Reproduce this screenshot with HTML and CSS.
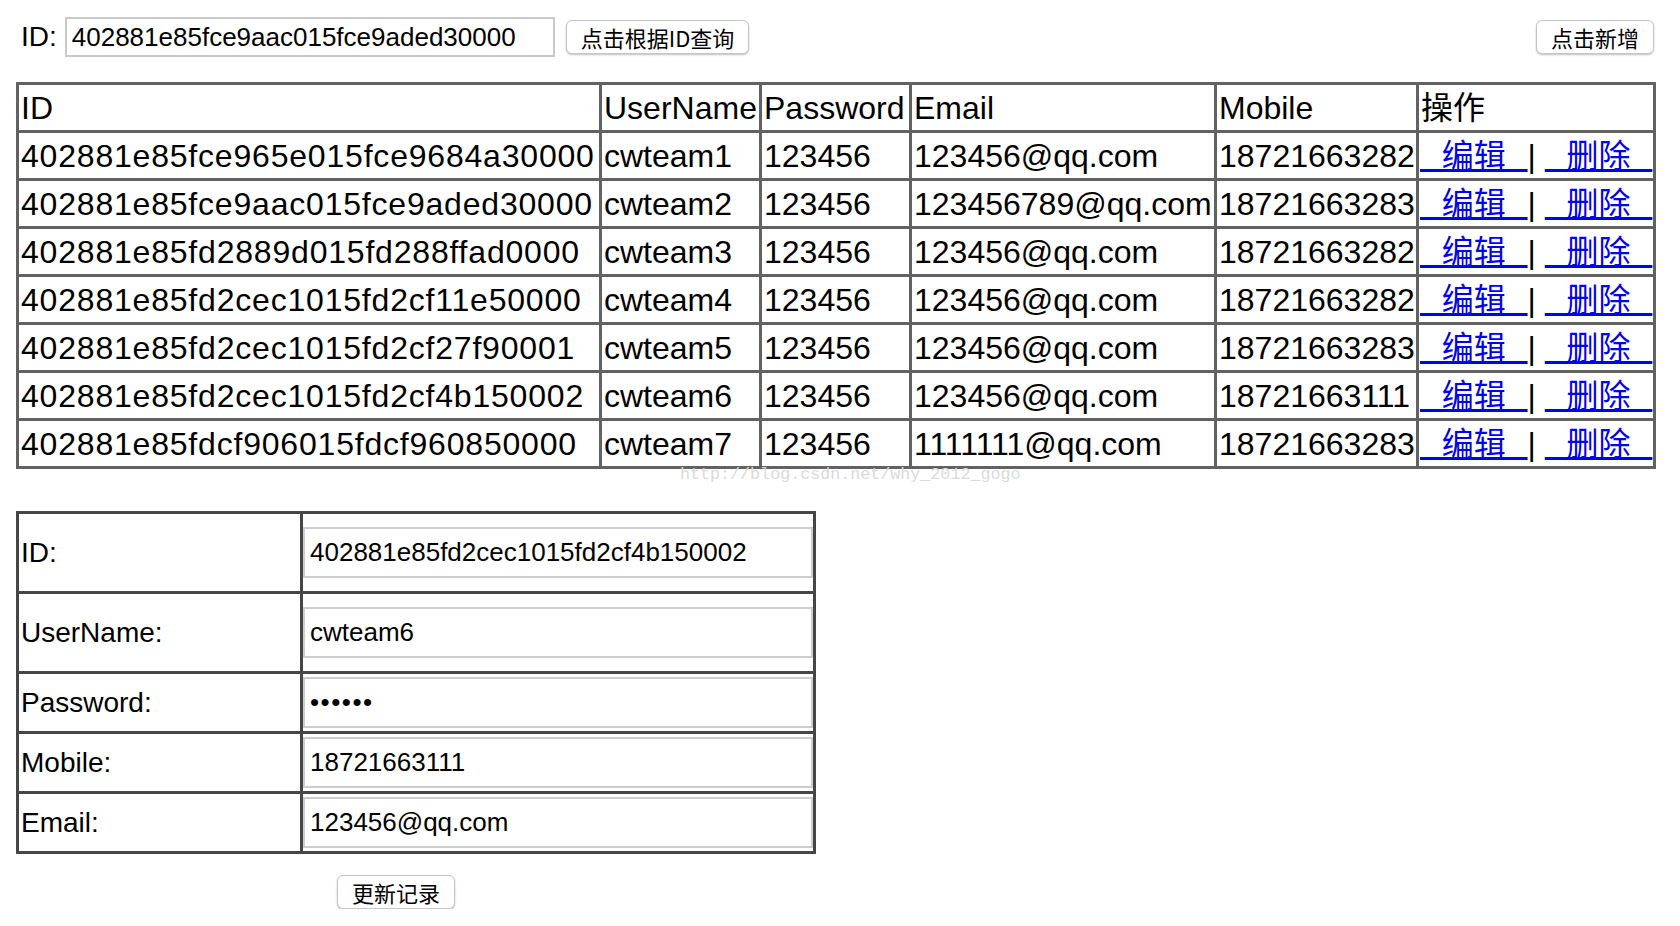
FILE: index.html
```html
<!DOCTYPE html>
<html lang="zh-CN">

<head>
  <meta charset="UTF-8">
  <meta name="viewport" content="width=device-width, initial-scale=1.0">
  <title>用户管理</title>
  <link rel="stylesheet" href="styles.css">
</head>

<body>
  <div class="page">
    <div class="toolbar">
      <div class="search">
        <label for="query_id">ID:</label>
        <input id="query_id" class="search-input" type="text" value="402881e85fce9aac015fce9aded30000">
        <button type="button" class="btn">点击根据ID查询</button>
      </div>
      <button type="button" class="btn">点击新增</button>
    </div>

    <table class="users">
      <colgroup>
        <col class="c-id">
        <col class="c-name">
        <col class="c-pass">
        <col class="c-mail">
        <col class="c-mobile">
        <col class="c-ops">
      </colgroup>
      <tr>
        <td>ID</td>
        <td>UserName</td>
        <td>Password</td>
        <td>Email</td>
        <td>Mobile</td>
        <td>操作</td>
      </tr>
      <tr>
        <td class="id">402881e85fce965e015fce9684a30000</td>
        <td>cwteam1</td>
        <td>123456</td>
        <td>123456@qq.com</td>
        <td>18721663282</td>
        <td class="ops"><a href="#">&nbsp;&nbsp;编辑&nbsp;&nbsp;</a>| <a href="#">&nbsp;&nbsp;删除&nbsp;&nbsp;</a></td>
      </tr>
      <tr>
        <td class="id">402881e85fce9aac015fce9aded30000</td>
        <td>cwteam2</td>
        <td>123456</td>
        <td>123456789@qq.com</td>
        <td>18721663283</td>
        <td class="ops"><a href="#">&nbsp;&nbsp;编辑&nbsp;&nbsp;</a>| <a href="#">&nbsp;&nbsp;删除&nbsp;&nbsp;</a></td>
      </tr>
      <tr>
        <td class="id">402881e85fd2889d015fd288ffad0000</td>
        <td>cwteam3</td>
        <td>123456</td>
        <td>123456@qq.com</td>
        <td>18721663282</td>
        <td class="ops"><a href="#">&nbsp;&nbsp;编辑&nbsp;&nbsp;</a>| <a href="#">&nbsp;&nbsp;删除&nbsp;&nbsp;</a></td>
      </tr>
      <tr>
        <td class="id">402881e85fd2cec1015fd2cf11e50000</td>
        <td>cwteam4</td>
        <td>123456</td>
        <td>123456@qq.com</td>
        <td>18721663282</td>
        <td class="ops"><a href="#">&nbsp;&nbsp;编辑&nbsp;&nbsp;</a>| <a href="#">&nbsp;&nbsp;删除&nbsp;&nbsp;</a></td>
      </tr>
      <tr>
        <td class="id">402881e85fd2cec1015fd2cf27f90001</td>
        <td>cwteam5</td>
        <td>123456</td>
        <td>123456@qq.com</td>
        <td>18721663283</td>
        <td class="ops"><a href="#">&nbsp;&nbsp;编辑&nbsp;&nbsp;</a>| <a href="#">&nbsp;&nbsp;删除&nbsp;&nbsp;</a></td>
      </tr>
      <tr>
        <td class="id">402881e85fd2cec1015fd2cf4b150002</td>
        <td>cwteam6</td>
        <td>123456</td>
        <td>123456@qq.com</td>
        <td>18721663111</td>
        <td class="ops"><a href="#">&nbsp;&nbsp;编辑&nbsp;&nbsp;</a>| <a href="#">&nbsp;&nbsp;删除&nbsp;&nbsp;</a></td>
      </tr>
      <tr>
        <td class="id">402881e85fdcf906015fdcf960850000</td>
        <td>cwteam7</td>
        <td>123456</td>
        <td>1111111@qq.com</td>
        <td>18721663283</td>
        <td class="ops"><a href="#">&nbsp;&nbsp;编辑&nbsp;&nbsp;</a>| <a href="#">&nbsp;&nbsp;删除&nbsp;&nbsp;</a></td>
      </tr>
    </table>

    <div class="watermark">http://blog.csdn.net/why_2012_gogo</div>

    <form class="edit-form">
      <table class="edit">
        <colgroup>
          <col class="c-label">
          <col class="c-field">
        </colgroup>
        <tr class="tall">
          <td class="label">ID:</td>
          <td class="field"><input type="text" name="id" value="402881e85fd2cec1015fd2cf4b150002"></td>
        </tr>
        <tr class="tall">
          <td class="label">UserName:</td>
          <td class="field"><input type="text" name="username" value="cwteam6"></td>
        </tr>
        <tr>
          <td class="label">Password:</td>
          <td class="field"><input type="password" name="password" value="123456"></td>
        </tr>
        <tr>
          <td class="label">Mobile:</td>
          <td class="field"><input type="text" name="mobile" value="18721663111"></td>
        </tr>
        <tr>
          <td class="label">Email:</td>
          <td class="field"><input type="text" name="email" value="123456@qq.com"></td>
        </tr>
      </table>
      <button type="button" class="btn update">更新记录</button>
    </form>
  </div>
</body>

</html>
```

FILE: styles.css
```css
* {
  box-sizing: border-box;
}

body {
  margin: 0;
  background: #fff;
  color: #000;
  font-family: "Liberation Sans", "Noto Sans CJK SC", sans-serif;
}

.page {
  position: relative;
  width: 1640px;
  margin-left: 16px;
  padding-top: 17px;
}

/* top bar */
.toolbar {
  display: flex;
  justify-content: space-between;
  align-items: center;
  height: 40px;
  padding-right: 2px;
}

.search {
  display: flex;
  align-items: center;
  padding-left: 5px;
}

.search label {
  font-size: 28px;
  margin-right: 8px;
}

.search-input {
  width: 490px;
  height: 40px;
  padding: 0 5px;
  border: 2px solid #c9c9c9;
  font-family: "Liberation Sans", sans-serif;
  font-size: 26px;
  color: #000;
  outline: none;
}

.btn {
  height: 34px;
  padding: 0 14px;
  background: #fff;
  border: 1px solid #c6c6c6;
  border-radius: 6px;
  box-shadow: 0 1px 2px rgba(0, 0, 0, 0.25);
  font-family: "Noto Sans CJK SC", "Liberation Sans", sans-serif;
  font-size: 22px;
  line-height: 30px;
  color: #000;
  cursor: pointer;
}

.search .btn {
  margin-left: 11px;
}

/* user list */
.users {
  margin-top: 25px;
  width: 1637px;
  table-layout: fixed;
  border-collapse: collapse;
  border: 3px solid #5e5e5e;
}

.users td {
  border: 3px solid #626262;
  padding: 3px 2px 1px;
  font-size: 32px;
  line-height: 41px;
  white-space: nowrap;
  overflow: hidden;
  text-align: left;
  vertical-align: middle;
}

.c-id { width: 583px; }
.c-name { width: 160px; }
.c-pass { width: 150px; }
.c-mail { width: 305px; }
.c-mobile { width: 202px; }
.c-ops { width: 237px; }

.users .id {
  letter-spacing: 0.8px;
}

.users .ops {
  padding-left: 1px;
}

.ops a {
  color: #0000ee;
  text-decoration: underline;
  word-spacing: 2px;
}

.watermark {
  position: absolute;
  left: 664px;
  top: 465px;
  font-family: "Liberation Mono", monospace;
  font-size: 16.7px;
  line-height: 20px;
  color: #dadada;
  pointer-events: none;
}

/* edit form */
.edit-form {
  margin-top: 42px;
}

.edit {
  width: 797px;
  table-layout: fixed;
  border-collapse: collapse;
  border: 3px solid #444;
}

.edit td {
  border: 3px solid #464646;
  vertical-align: middle;
}

.c-label { width: 284px; }
.c-field { width: 513px; }

.edit .label {
  padding: 0 2px;
  font-size: 28px;
}

.edit .field {
  padding: 3px 0;
}

.edit .tall .field {
  padding: 13px 0;
}

.edit input {
  display: block;
  width: 100%;
  height: 51px;
  padding: 0 5px;
  border: 2px solid #cdcdcd;
  font-family: "Liberation Sans", sans-serif;
  font-size: 26px;
  color: #000;
  outline: none;
}

.edit input[type="password"] {
  letter-spacing: 1.5px;
}

.update {
  margin-top: 21px;
  margin-left: 321px;
}
```
